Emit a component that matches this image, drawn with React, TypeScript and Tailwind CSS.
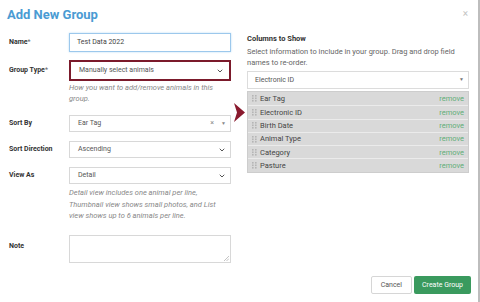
import { ChevronDown } from "lucide-react";

const font = { fontFamily: "Roboto, 'Liberation Sans', sans-serif" };

function Grip() {
    return (
        <svg width="5" height="7" viewBox="0 0 5 7" className="shrink-0">
            {[0, 3].map((x) =>
                [0, 2.5, 5].map((y) => <rect key={`${x}-${y}`} x={x} y={y} width="1.6" height="1.6" fill="#b5b5b5" />)
            )}
        </svg>
    );
}

function Label({ children, req }: { children: string; req?: boolean }) {
    return (
        <div className="w-[60px] shrink-0 text-[7px] font-bold text-[#333]">
            {children}
            {req && <span className="text-[#666] font-normal">*</span>}
        </div>
    );
}

function Select({ value, extra }: { value: string; extra?: boolean }) {
    return (
        <div className="h-[17px] w-[162px] border border-[#d8d8d8] flex items-center pl-[8px] pr-[4px] text-[7px] text-[#555]">
            <span className="flex-1">{value}</span>
            {extra ? (
                <span className="flex items-center gap-[7px] text-[#888] text-[7px]">
                    <span>×</span>
                    <span className="text-[5px]">▼</span>
                </span>
            ) : (
                <ChevronDown size={8} strokeWidth={3} className="text-[#555]" />
            )}
        </div>
    );
}

const columns = ["Ear Tag", "Electronic ID", "Birth Date", "Animal Type", "Category", "Pasture"];

export default function App() {
    return (
        <div style={font} className="w-[480px] h-[302px] bg-white relative border-r-2 border-[#bdbdbd] overflow-hidden">
            <div className="absolute right-[10px] top-[6px] text-[#c4c4c4] text-[10px]">×</div>

            <h1 className="pl-[7px] pt-[5px] text-[13px] leading-[20px] font-bold text-[#4a9bd3]">Add New Group</h1>

            <div className="flex pl-[9px] pt-[8px]">
                {/* left column */}
                <div className="w-[222px] flex flex-col">
                    <div className="flex items-center">
                        <Label req>Name</Label>
                        <div className="h-[19px] w-[162px] border border-[#9cc8ec] shadow-[0_0_2px_#bcdcf5] flex items-center pl-[7px] text-[7px] text-[#444]">
                            Test Data 2022
                        </div>
                    </div>

                    <div className="flex items-center mt-[8px]">
                        <Label req>Group Type</Label>
                        <div className="h-[21px] w-[164px] border-2 border-[#7b1a2b] flex items-center pl-[8px] pr-[5px] text-[7px] text-[#555]">
                            <span className="flex-1">Manually select animals</span>
                            <ChevronDown size={8} strokeWidth={3} className="text-[#555]" />
                        </div>
                    </div>
                    <p className="ml-[60px] mt-[1px] text-[7.5px] leading-[11px] italic text-[#888] w-[150px]">
                        How you want to add/remove animals in this group.
                    </p>

                    <div className="flex items-center mt-[11px]">
                        <Label>Sort By</Label>
                        <Select value="Ear Tag" extra />
                    </div>
                    <div className="flex items-center mt-[9px]">
                        <Label>Sort Direction</Label>
                        <Select value="Ascending" />
                    </div>
                    <div className="flex items-center mt-[9px]">
                        <Label>View As</Label>
                        <Select value="Detail" />
                    </div>
                    <p className="ml-[60px] mt-[3px] text-[7.5px] leading-[11.5px] italic text-[#888] w-[162px]">
                        Detail view includes one animal per line, Thumbnail view shows small photos, and List view shows up to 6 animals per line.
                    </p>

                    <div className="flex items-start mt-[13px]">
                        <div className="pt-[6px]">
                            <Label>Note</Label>
                        </div>
                        <div className="h-[28px] w-[162px] border border-[#d8d8d8] relative">
                            <svg width="5" height="5" viewBox="0 0 5 5" className="absolute right-[1px] bottom-[1px]">
                                <path d="M5 0 L0 5 M5 2.5 L2.5 5" stroke="#aaa" strokeWidth="0.7" />
                            </svg>
                        </div>
                    </div>
                </div>

                {/* arrow */}
                <div className="w-[16px] shrink-0 relative">
                    <svg width="11" height="19" viewBox="0 0 11 19" className="absolute left-[3px] top-[70px]">
                        <polygon points="0,0 11,9.5 0,19 3,9.5" fill="#8a1a2e" />
                    </svg>
                </div>

                {/* right column */}
                <div className="w-[222px] flex flex-col">
                    <div className="text-[7.5px] font-bold text-[#333] leading-[11px]">Columns to Show</div>
                    <p className="text-[7.5px] leading-[11px] text-[#666] mt-[2px]">
                        Select information to include in your group. Drag and drop field names to re-order.
                    </p>
                    <div className="mt-[3px] h-[18px] border border-[#dcdcdc] flex items-center pl-[7px] pr-[4px] text-[7px] text-[#555]">
                        <span className="flex-1">Electronic ID</span>
                        <span className="text-[5px] text-[#777]">▼</span>
                    </div>
                    <div className="mt-[2px] border border-[#cdcdcd] bg-[#d9d9d9]">
                        {columns.map((c, i) => (
                            <div
                                key={c}
                                className={`h-[13.3px] flex items-center pl-[4px] pr-[4px] gap-[3px] ${i > 0 ? "border-t border-[#ebebeb]" : ""}`}
                            >
                                <Grip />
                                <span className="flex-1 text-[7.5px] text-[#444]">{c}</span>
                                <span className="text-[7.5px] text-[#5fae78]">remove</span>
                            </div>
                        ))}
                    </div>
                </div>
            </div>

            <div className="absolute right-[7px] bottom-[8px] flex gap-[2px]">
                <button className="h-[18px] px-[9px] border border-[#d6d6d6] rounded-[2px] bg-white text-[7px] text-[#555]">Cancel</button>
                <button className="h-[18px] px-[8px] rounded-[2px] bg-[#3a9a5e] text-[7px] text-white">Create Group</button>
            </div>
        </div>
    );
}
